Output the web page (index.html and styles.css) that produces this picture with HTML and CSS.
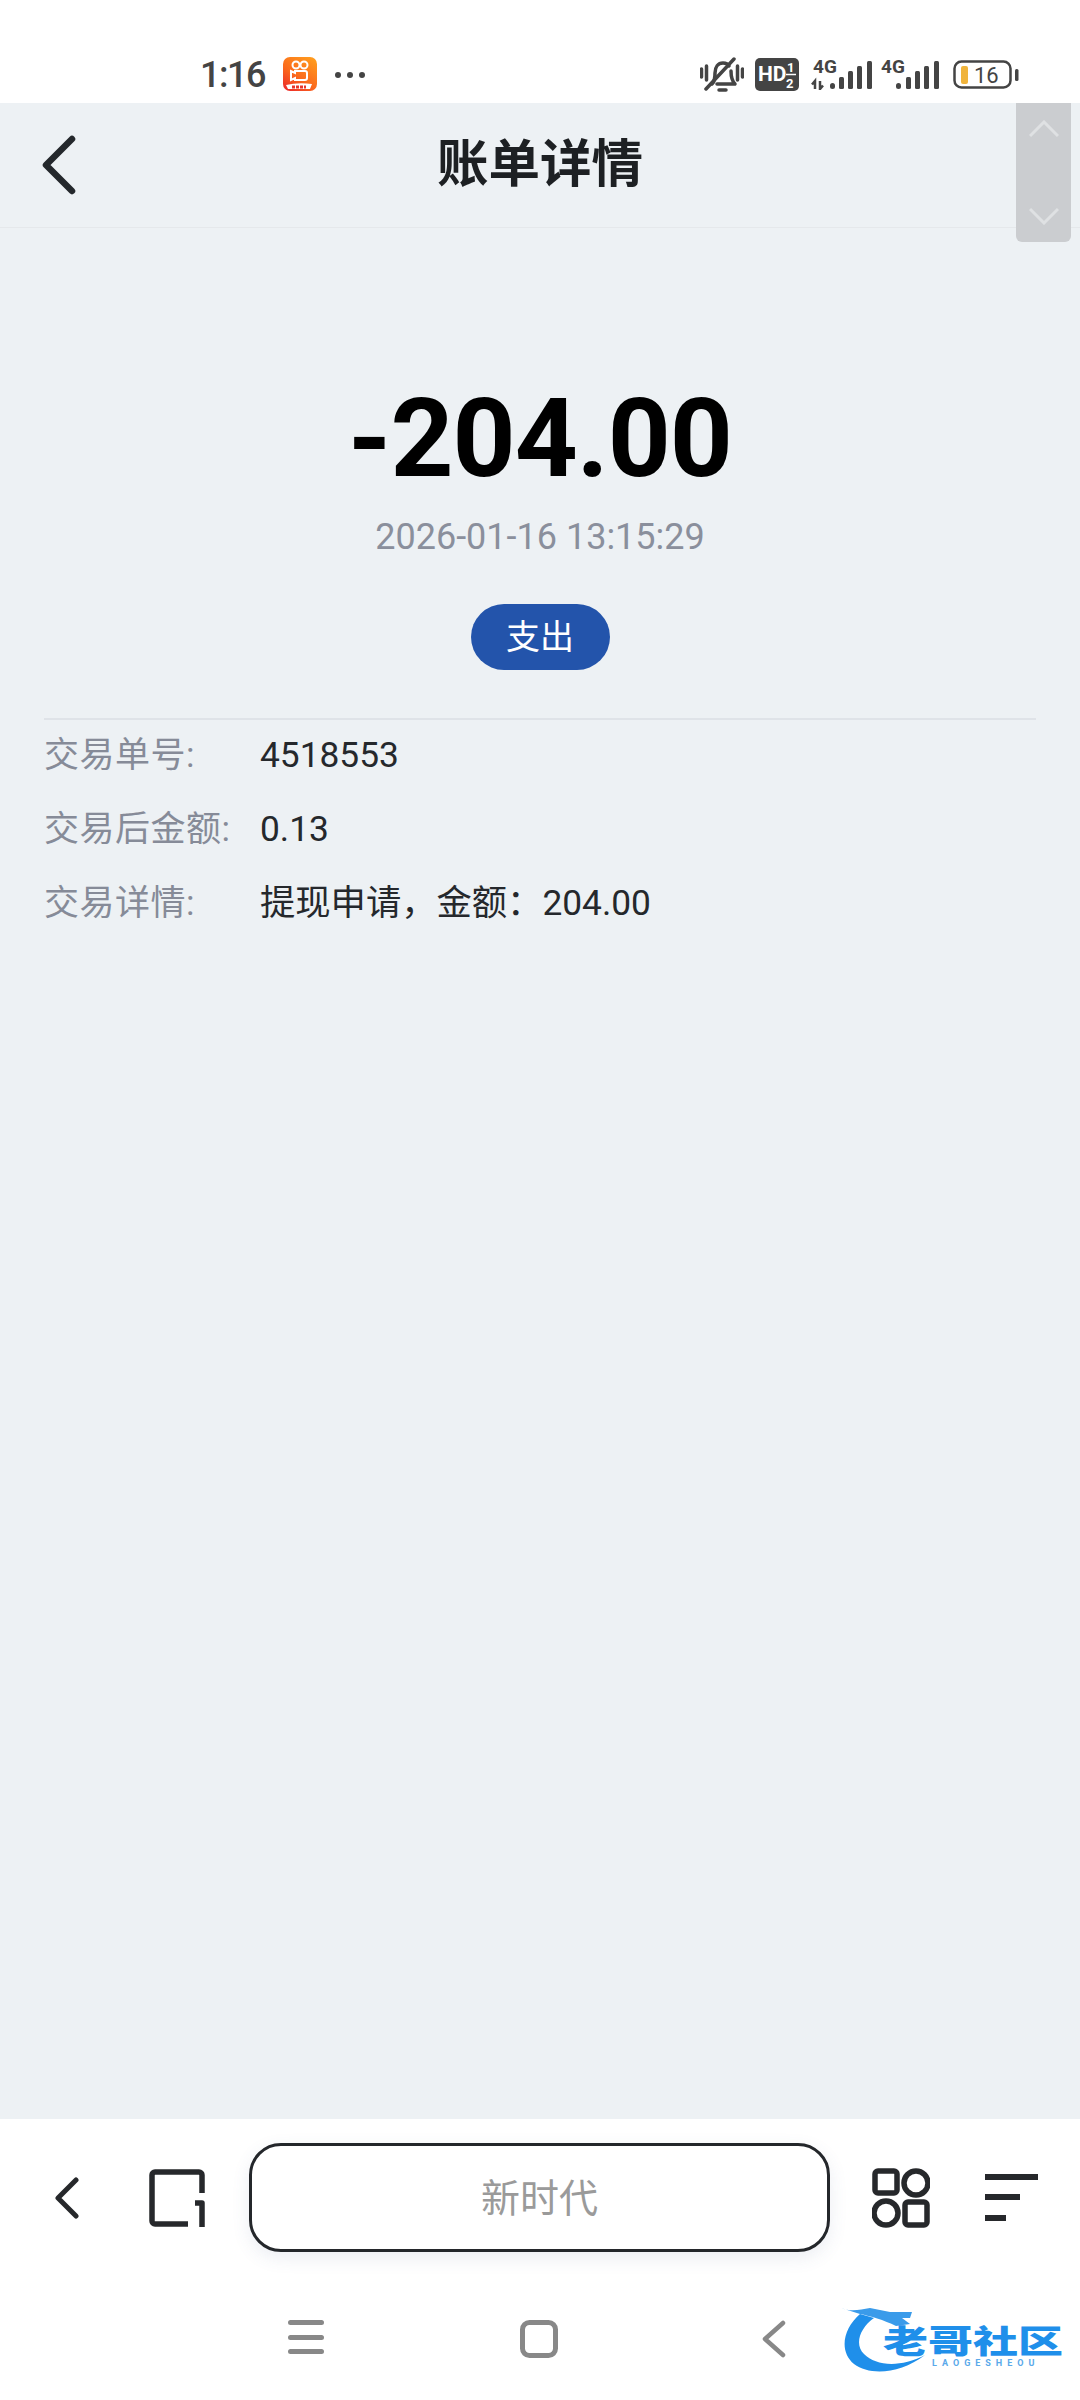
FILE: index.html
```html
<!DOCTYPE html>
<html lang="zh">
<head>
<meta charset="utf-8">
<title>账单详情</title>
<link rel="stylesheet" href="styles.css">
</head>
<body>
<div class="page">
  <div class="status">
    <div class="status-left">
      <span class="time">1:16</span>
      <svg class="app-icon" viewBox="0 0 34 36">
        <defs><linearGradient id="ks" x1="0.8" y1="0" x2="0.1" y2="1"><stop offset="0" stop-color="#ff9a1e"/><stop offset="0.55" stop-color="#fb6a1c"/><stop offset="1" stop-color="#ec2a2a"/></linearGradient></defs>
        <rect x="0" y="0" width="34" height="34" rx="7" fill="url(#ks)"/>
        <circle cx="13" cy="8" r="3.500" fill="none" stroke="#fff" stroke-width="2"/>
        <circle cx="21" cy="8" r="3.500" fill="none" stroke="#fff" stroke-width="2"/>
        <path d="M12 14h10a2 2 0 0 1 2 2v5a2 2 0 0 1-2 2h-10v-2l-4 2v-9l4 2z" fill="none" stroke="#fff" stroke-width="2"/>
        <path d="M3 28q12 -3 26 -1l-2 5h-22z" fill="#fff"/>
        <path d="M9 30h14" stroke="#e8362c" stroke-width="3" stroke-dasharray="3 1"/>
      </svg>
      <span class="dots"><i></i><i></i><i></i></span>
    </div>
    <div class="status-right">
      <svg class="ic-mute" viewBox="0 0 44 36" fill="none" stroke="#444" stroke-width="3.500" stroke-linecap="round" stroke-linejoin="round">
        <path d="M1.500 12v8M6.500 9v14M37.500 9v14M42.500 12v8"/>
        <path d="M12 27c3-3 3-6 3-11 0-6 3-10 8-10 3 0 5 1 6 3M31 14c0 6 1 10 4 13H17"/>
        <path d="M6 32 34 2"/>
        <path d="M19 33h7"/>
      </svg>
      <svg class="ic-hd" viewBox="0 0 44 33">
        <rect width="44" height="33" rx="5" fill="#444"/>
        <text x="3" y="23" class="hd-text">HD</text>
        <text x="32" y="14" class="hd-small">1</text>
        <path d="M31 16.500h10" stroke="#fff" stroke-width="1.500"/>
        <text x="31" y="30" class="hd-small">2</text>
      </svg>
      <svg class="ic-sig1" viewBox="0 -6 62 36">
        <text x="2" y="13" class="sig-text">4G</text>
        <path d="M4 29v-8l-3 3.500M9 21v8l3-3.500" fill="none" stroke="#444" stroke-width="2.500"/>
        <g fill="#444">
          <rect x="19" y="23" width="5" height="6" rx="2.500"/>
          <rect x="28" y="17" width="5" height="12" rx="1.500"/>
          <rect x="37" y="11" width="5" height="18" rx="1.500"/>
          <rect x="46" y="6" width="5" height="23" rx="1.500"/>
          <rect x="56" y="1" width="5" height="28" rx="1.500"/>
        </g>
      </svg>
      <svg class="ic-sig2" viewBox="0 -6 60 36">
        <text x="0" y="13" class="sig-text">4G</text>
        <g fill="#444">
          <rect x="15" y="23" width="5" height="6" rx="2.500"/>
          <rect x="25" y="17" width="5" height="12" rx="1.500"/>
          <rect x="34" y="11" width="5" height="18" rx="1.500"/>
          <rect x="43" y="6" width="5" height="23" rx="1.500"/>
          <rect x="53" y="1" width="5" height="28" rx="1.500"/>
        </g>
      </svg>
      <svg class="ic-batt" viewBox="0 0 66 30">
        <rect x="1.500" y="1.500" width="56" height="26" rx="7" fill="none" stroke="#444" stroke-width="2.500"/>
        <rect x="8" y="6" width="7" height="18" rx="2" fill="#f0b43c"/>
        <text x="21" y="23" class="batt-text">16</text>
        <rect x="62" y="9" width="3.500" height="12" rx="1.500" fill="#444"/>
      </svg>
    </div>
  </div>

  <header class="head">
    <svg class="head-back" viewBox="0 0 36 60" fill="none" stroke="#24282c" stroke-width="6.500" stroke-linecap="round" stroke-linejoin="round"><path d="M31 4 5 30l26 26"/></svg>
    <h1 class="head-title">账单详情</h1>
  </header>

  <aside class="scroller">
    <svg viewBox="0 0 30 18" fill="none" stroke="#dfe1e3" stroke-width="3"><path d="M1 16 15 2l14 14"/></svg>
    <svg viewBox="0 0 30 18" fill="none" stroke="#dfe1e3" stroke-width="3"><path d="M1 2l14 14L29 2"/></svg>
  </aside>

  <main class="content">
    <div class="amount">-204.00</div>
    <div class="date">2026-01-16 13:15:29</div>
    <div class="pill">支出</div>
    <div class="rows">
      <div class="row"><span class="label">交易单号:</span><span class="value">4518553</span></div>
      <div class="row"><span class="label">交易后金额:</span><span class="value">0.13</span></div>
      <div class="row"><span class="label">交易详情:</span><span class="value">提现申请，金额：204.00</span></div>
    </div>
  </main>

  <div class="browser">
    <svg class="b-back" viewBox="0 0 24 42" fill="none" stroke="#26282b" stroke-width="5" stroke-linecap="round" stroke-linejoin="round"><path d="M21 3 3 21l18 18"/></svg>
    <svg class="b-tabs" viewBox="0 0 58 60" fill="none" stroke="#26282b" stroke-width="5.500" stroke-linejoin="round">
      <path d="M40 56H7a3 3 0 0 1-3-3V7a3 3 0 0 1 3-3h44a3 3 0 0 1 3 3v18"/>
      <path d="M47 35h7v24"/>
    </svg>
    <div class="search">新时代</div>
    <svg class="b-grid" viewBox="0 0 58 60" fill="none" stroke="#26282b" stroke-width="5.500" stroke-linejoin="round">
      <rect x="3" y="3" width="22" height="22" rx="3"/>
      <circle cx="44" cy="15" r="12"/>
      <circle cx="14" cy="45" r="12"/>
      <rect x="33" y="34" width="22" height="23" rx="3"/>
    </svg>
    <svg class="b-menu" viewBox="0 0 53 48" fill="#26282b">
      <rect x="0" y="0" width="53" height="6"/>
      <rect x="0" y="20" width="35" height="6"/>
      <rect x="0" y="41" width="21" height="6"/>
    </svg>
  </div>

  <nav class="nav">
    <svg class="n-menu" viewBox="0 0 36 34" fill="#888"><rect y="0" width="36" height="5" rx="2.500"/><rect y="15" width="36" height="5" rx="2.500"/><rect y="29" width="36" height="5" rx="2.500"/></svg>
    <svg class="n-home" viewBox="0 0 38 38" fill="none" stroke="#888" stroke-width="5"><rect x="2.500" y="2.500" width="33" height="33" rx="7"/></svg>
    <svg class="n-back" viewBox="0 0 24 38" fill="none" stroke="#888" stroke-width="4.500" stroke-linecap="round" stroke-linejoin="round"><path d="M21 3 3 19l18 16"/></svg>
    <div class="logo">
      <svg class="logo-mark" viewBox="0 0 222 72">
        <path d="M20 10C4 24-2 46 14 60c16 12 46 10 71-9-25 13-49 11-61-1C14 40 20 24 34 14z" fill="#1f8fea"/>
        <path d="M1 4c9 4 19 2 29 0l20 4 22 0-2 6h-8l8 6-14 2C44 16 30 12 20 10z" fill="#3a9bea"/>
      </svg>
      <span class="logo-name">老哥社区</span>
      <span class="logo-sub">LAOGESHEOU</span>
    </div>
  </nav>
</div>
</body>
</html>
```

FILE: styles.css
```css
* { box-sizing: border-box; }
html, body { margin: 0; padding: 0; }
body {
  background: #fff;
  font-family: Roboto, "Noto Sans CJK SC", sans-serif;
}
.page {
  position: relative;
  width: 1080px;
  height: 2400px;
  display: flex;
  flex-direction: column;
  overflow: hidden;
}

/* status bar */
.status {
  height: 103px;
  flex: none;
  display: flex;
  justify-content: space-between;
  align-items: flex-start;
  padding: 0 61px 0 200px;
  background: #fff;
}
.status-left { display: flex; align-items: center; padding-top: 57px; }
.time { font-size: 36px; font-weight: 500; letter-spacing: -1.5px; color: #444; width: 83px; line-height: 36px; }
.app-icon { width: 34px; height: 36px; }
.dots { display: flex; gap: 6px; margin-left: 18px; }
.dots i { width: 6px; height: 6px; border-radius: 50%; background: #444; }
.status-right { display: flex; align-items: flex-start; padding-top: 57px; }
.ic-mute { width: 44px; height: 36px; }
.ic-hd { width: 44px; height: 33px; margin: 1px 0 0 11px; }
.ic-sig1 { width: 62px; height: 36px; margin: -3px 0 0 12px; }
.ic-sig2 { width: 60px; height: 36px; margin: -3px 0 0 8px; }
.ic-batt { width: 66px; height: 30px; margin: 3px 0 0 12px; }
.hd-text { font: 700 21px Roboto, sans-serif; fill: #fff; }
.hd-small { font: 700 13px Roboto, sans-serif; fill: #fff; }
.sig-text { font: 700 19px Roboto, sans-serif; fill: #444; }
.batt-text { font: 400 22px Roboto, sans-serif; fill: #444; }

/* header */
.head {
  height: 125px;
  flex: none;
  display: flex;
  align-items: center;
  justify-content: center;
  position: relative;
  background: #edf1f4;
  border-bottom: 1px solid #e5e8eb;
}
.head-back { position: absolute; left: 41px; top: 32px; width: 36px; height: 60px; }
.head-title {
  margin: 0;
  font-size: 51.500px;
  font-weight: 700;
  color: #1d2023;
  line-height: 60px;
}
.scroller {
  position: absolute;
  left: 1016px;
  top: 103px;
  width: 55px;
  height: 139px;
  background: #cbcdd0;
  border-radius: 0 0 6px 6px;
  display: flex;
  flex-direction: column;
  justify-content: space-between;
  align-items: center;
  padding: 17px 0;
}
.scroller svg { width: 30px; height: 18px; }

/* content */
.content {
  flex: 1;
  background: #edf1f4;
  display: flex;
  flex-direction: column;
  align-items: center;
  padding: 146px 44px 0;
}
.amount {
  font-size: 110px;
  font-weight: 700;
  letter-spacing: -1px;
  line-height: 130px;
  color: #000;
}
.date {
  margin-top: 11px;
  font-size: 36px;
  line-height: 44px;
  color: #8a8f9c;
}
.pill {
  margin-top: 45px;
  width: 139px;
  height: 66px;
  border-radius: 33px;
  background: #2354ab;
  color: #fff;
  font-size: 34px;
  line-height: 66px;
  text-align: center;
}
.rows {
  align-self: stretch;
  margin-top: 48px;
  border-top: 2px solid #dfe3e8;
  padding-top: 3px;
  display: flex;
  flex-direction: column;
  gap: 9px;
}
.row { display: flex; align-items: baseline; font-size: 35px; line-height: 64px; }
.label { width: 216px; color: #868b98; flex: none; letter-spacing: 0.5px; }
.value { color: #25282c; font-size: 35.300px; }

/* browser bar */
.browser {
  height: 161px;
  flex: none;
  background: #fff;
  display: flex;
  align-items: center;
  padding: 0 0 4px 55px;
}
.b-back { width: 24px; height: 42px; }
.b-tabs { width: 58px; height: 60px; margin-left: 69px; }
.b-grid { width: 58px; height: 60px; margin-left: 42px; }
.b-menu { width: 53px; height: 48px; margin-left: 55px; }
.search {
  width: 581px;
  height: 109px;
  margin-left: 43px;
  border: 3px solid #24272b;
  border-radius: 32px;
  background: #fff;
  box-shadow: 0 6px 18px rgba(70, 90, 140, 0.1);
  color: #9a9a9a;
  font-size: 39px;
  line-height: 107px;
  text-align: center;
}

/* navigation */
.nav {
  height: 120px;
  flex: none;
  position: relative;
  background: #fff;
  display: flex;
  align-items: flex-start;
  padding: 40px 0 0 288px;
}
.n-menu { width: 36px; height: 34px; }
.n-home { width: 38px; height: 38px; margin-left: 196px; }
.n-back { width: 24px; height: 38px; margin-left: 204px; }
.logo {
  position: absolute;
  left: 842px;
  top: 24px;
  width: 222px;
  height: 72px;
  color: #1f8fea;
}
.logo-mark { position: absolute; left: -2px; top: 0; width: 222px; height: 72px; }
.logo-name {
  position: absolute;
  left: 41px;
  top: 18px;
  font-size: 45px;
  line-height: 40px;
  font-weight: 900;
  white-space: nowrap;
  transform: scaleY(0.72);
}
.logo-sub {
  position: absolute;
  left: 90px;
  top: 55px;
  font-size: 9px;
  line-height: 9px;
  font-weight: 700;
  letter-spacing: 5px;
  color: #5aa9ea;
  white-space: nowrap;
}
```
